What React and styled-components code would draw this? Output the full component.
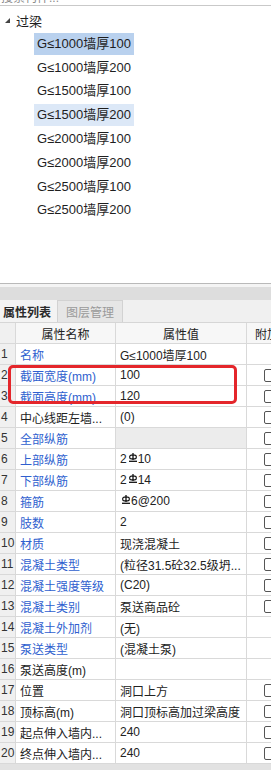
import React from "react";
import styled, { createGlobalStyle } from "styled-components";

const GlobalStyle = createGlobalStyle`
  html, body { margin: 0; padding: 0; background: #ffffff; }
  body {
    font-family: "Liberation Sans", "DejaVu Sans", "Noto Sans CJK SC", sans-serif;
    overflow: hidden;
  }
`;

const Page = styled.div`
  width: 271px;
  height: 770px;
  display: flex;
  flex-direction: column;
  overflow: hidden;
  background: #fff;
`;

const TopPanel = styled.div`
  height: 283px;
  display: flex;
  flex-direction: column;
  flex: none;
`;

const ClippedSearch = styled.div`
  height: 5px;
  overflow: hidden;
  border-bottom: 1px solid #c9c9c9;
  flex: none;
`;

const SearchText = styled.div`
  margin-top: -9px;
  padding-left: 1px;
  font-size: 12px;
  line-height: 14px;
  color: #8a8a8a;
`;

const Tree = styled.div`
  display: flex;
  flex-direction: column;
  padding-top: 2px;
`;

const TreeRoot = styled.div`
  height: 24px;
  display: flex;
  align-items: center;
  padding-left: 5px;
  gap: 6px;
  font-size: 13px;
  color: #1e1e1e;
`;

const Arrow = styled.svg`
  width: 5px;
  height: 5px;
  flex: none;
`;

const TreeItem = styled.div`
  height: 23.8px;
  display: flex;
  align-items: center;
  padding-left: 34px;
`;

const TreeLabel = styled.span`
  display: inline-block;
  height: 22px;
  line-height: 22px;
  padding: 0 3px;
  font-size: 13px;
  color: #1e1e1e;
  white-space: nowrap;
  background: ${(p) =>
    p.$state === "selected" ? "#b9d1ee" : p.$state === "hover" ? "#dce8f7" : "transparent"};
`;

const BottomPanel = styled.div`
  flex: 1;
  display: flex;
  flex-direction: column;
  border-top: 1px solid #b9b9b9;
  background: #e2e2e2;
  min-height: 0;
`;

const TopBand = styled.div`
  height: 16px;
  flex: none;
  background: linear-gradient(#f4f4f4 0 3px, #dddddd 3px);
`;

const TabStrip = styled.div`
  height: 22px;
  flex: none;
  display: flex;
  align-items: stretch;
  background: #f0f0f0;
  border-bottom: 1px solid #d6d6d6;
`;

const Tab = styled.div`
  width: ${(p) => (p.$active ? "58px" : "65px")};
  padding-left: ${(p) => (p.$active ? "3px" : "0")};
  box-sizing: border-box;
  display: flex;
  align-items: center;
  justify-content: ${(p) => (p.$active ? "flex-start" : "center")};
  white-space: nowrap;
  font-size: 12px;
  font-weight: ${(p) => (p.$active ? 700 : 400)};
  color: ${(p) => (p.$active ? "#2a2a2a" : "#9a9a9a")};
  background: ${(p) => (p.$active ? "#f3f3f3" : "#e6e6e6")};
  border-right: 1px solid #d2d2d2;
  border-top: ${(p) => (p.$active ? "none" : "1px solid #d2d2d2")};
`;

const TableWrap = styled.div`
  position: relative;
  width: 271px;
  overflow: hidden;
  background: #fff;
  flex: none;
`;

const Grid = styled.div`
  width: 288px;
  display: flex;
  flex-direction: column;
`;

const Row = styled.div`
  display: grid;
  grid-template-columns: 16px 100px 131px 41px;
  height: 21px;
  box-sizing: border-box;
  border-bottom: 1px solid #d9d9d9;
  font-size: 12px;
  color: #222;
  background: ${(p) => (p.$header ? "#f7f7f7" : "#fff")};
`;

const Cell = styled.div`
  display: flex;
  align-items: center;
  box-sizing: border-box;
  border-right: 1px solid #d9d9d9;
  padding-left: ${(p) => (p.$center ? "0" : "4px")};
  justify-content: ${(p) => (p.$center ? "center" : "flex-start")};
  white-space: nowrap;
  overflow: hidden;
  color: ${(p) => (p.$blue ? "#2f5fcf" : "#222")};
  background: ${(p) => (p.$gray ? "#ececec" : "transparent")};
`;

const IndexCell = styled(Cell)`
  background: #f0f0f0;
  padding-left: 1px;
  color: #333;
`;

const HeaderExtra = styled(Cell)`
  padding-left: 8px;
`;

const Checkbox = styled.span`
  width: 11px;
  height: 11px;
  border: 1px solid #555;
  border-radius: 2px;
  background: #fff;
  margin-left: 13px;
`;

const Rebar = styled.svg`
  width: 8px;
  height: 9px;
  margin: 0 1px 0 2px;
  position: relative;
  top: -2px;
`;

const Bottom = styled.div`
  flex: 1;
  background: #e2e2e2;
`;

const RedBox = styled.div`
  position: absolute;
  left: 8px;
  top: 42px;
  width: 229px;
  height: 39px;
  box-sizing: border-box;
  border: 3px solid #e4262b;
  border-radius: 5px;
  pointer-events: none;
`;

const RebarIcon = () => (
  <Rebar viewBox="0 0 8 9">
    <line x1="4" y1="0" x2="4" y2="7" stroke="#111" strokeWidth="1.3" />
    <rect x="0.7" y="2.2" width="6.6" height="3.6" rx="1.6" fill="none" stroke="#111" strokeWidth="1.2" />
    <line x1="0" y1="8.3" x2="8" y2="8.3" stroke="#111" strokeWidth="1.3" />
  </Rebar>
);

const treeItems = [
  { t: "G≤1000墙厚100", s: "selected" },
  { t: "G≤1000墙厚200" },
  { t: "G≤1500墙厚100" },
  { t: "G≤1500墙厚200", s: "hover" },
  { t: "G≤2000墙厚100" },
  { t: "G≤2000墙厚200" },
  { t: "G≤2500墙厚100" },
  { t: "G≤2500墙厚200" },
];

const rows = [
  { n: "名称", v: "G≤1000墙厚100", b: true, c: false },
  { n: "截面宽度(mm)", v: "100", b: true, c: true },
  { n: "截面高度(mm)", v: "120", b: true, c: true },
  { n: "中心线距左墙...", v: "(0)", b: false, c: true },
  { n: "全部纵筋", v: "", b: true, c: true, g: true },
  { n: "上部纵筋", v: ["2", "R", "10"], b: true, c: true },
  { n: "下部纵筋", v: ["2", "R", "14"], b: true, c: true },
  { n: "箍筋", v: ["R", "6@200"], b: true, c: true },
  { n: "肢数", v: "2", b: true, c: true },
  { n: "材质", v: "现浇混凝土", b: true, c: true },
  { n: "混凝土类型", v: "(粒径31.5砼32.5级坍...", b: true, c: true },
  { n: "混凝土强度等级", v: "(C20)", b: true, c: true },
  { n: "混凝土类别", v: "泵送商品砼", b: true, c: true },
  { n: "混凝土外加剂", v: "(无)", b: true, c: false },
  { n: "泵送类型", v: "(混凝土泵)", b: true, c: false },
  { n: "泵送高度(m)", v: "", b: false, c: false },
  { n: "位置", v: "洞口上方", b: false, c: true },
  { n: "顶标高(m)", v: "洞口顶标高加过梁高度", b: false, c: true },
  { n: "起点伸入墙内...", v: "240", b: false, c: true },
  { n: "终点伸入墙内...", v: "240", b: false, c: true },
];

const renderValue = (v) =>
  Array.isArray(v)
    ? v.map((p, i) => (p === "R" ? <RebarIcon key={i} /> : <span key={i}>{p}</span>))
    : v;

export default function App() {
  return (
    <>
      <GlobalStyle />
      <Page>
        <TopPanel>
          <ClippedSearch>
            <SearchText>搜索构件...</SearchText>
          </ClippedSearch>
          <Tree>
            <TreeRoot>
              <Arrow viewBox="0 0 5 5">
                <polygon points="5,0 5,5 0,5" fill="#444" />
              </Arrow>
              过梁
            </TreeRoot>
            {treeItems.map((it) => (
              <TreeItem key={it.t}>
                <TreeLabel $state={it.s}>{it.t}</TreeLabel>
              </TreeItem>
            ))}
          </Tree>
        </TopPanel>
        <BottomPanel>
          <TopBand />
          <TabStrip>
            <Tab $active>属性列表</Tab>
            <Tab>图层管理</Tab>
          </TabStrip>
          <TableWrap>
            <Grid>
              <Row $header>
                <IndexCell />
                <Cell $center>属性名称</Cell>
                <Cell $center>属性值</Cell>
                <HeaderExtra>附加</HeaderExtra>
              </Row>
              {rows.map((r, i) => (
                <Row key={i}>
                  <IndexCell>{i + 1}</IndexCell>
                  <Cell $blue={r.b}>{r.n}</Cell>
                  <Cell $gray={r.g}>{renderValue(r.v)}</Cell>
                  <Cell>{r.c ? <Checkbox /> : null}</Cell>
                </Row>
              ))}
            </Grid>
            <RedBox />
          </TableWrap>
          <Bottom />
        </BottomPanel>
      </Page>
    </>
  );
}
